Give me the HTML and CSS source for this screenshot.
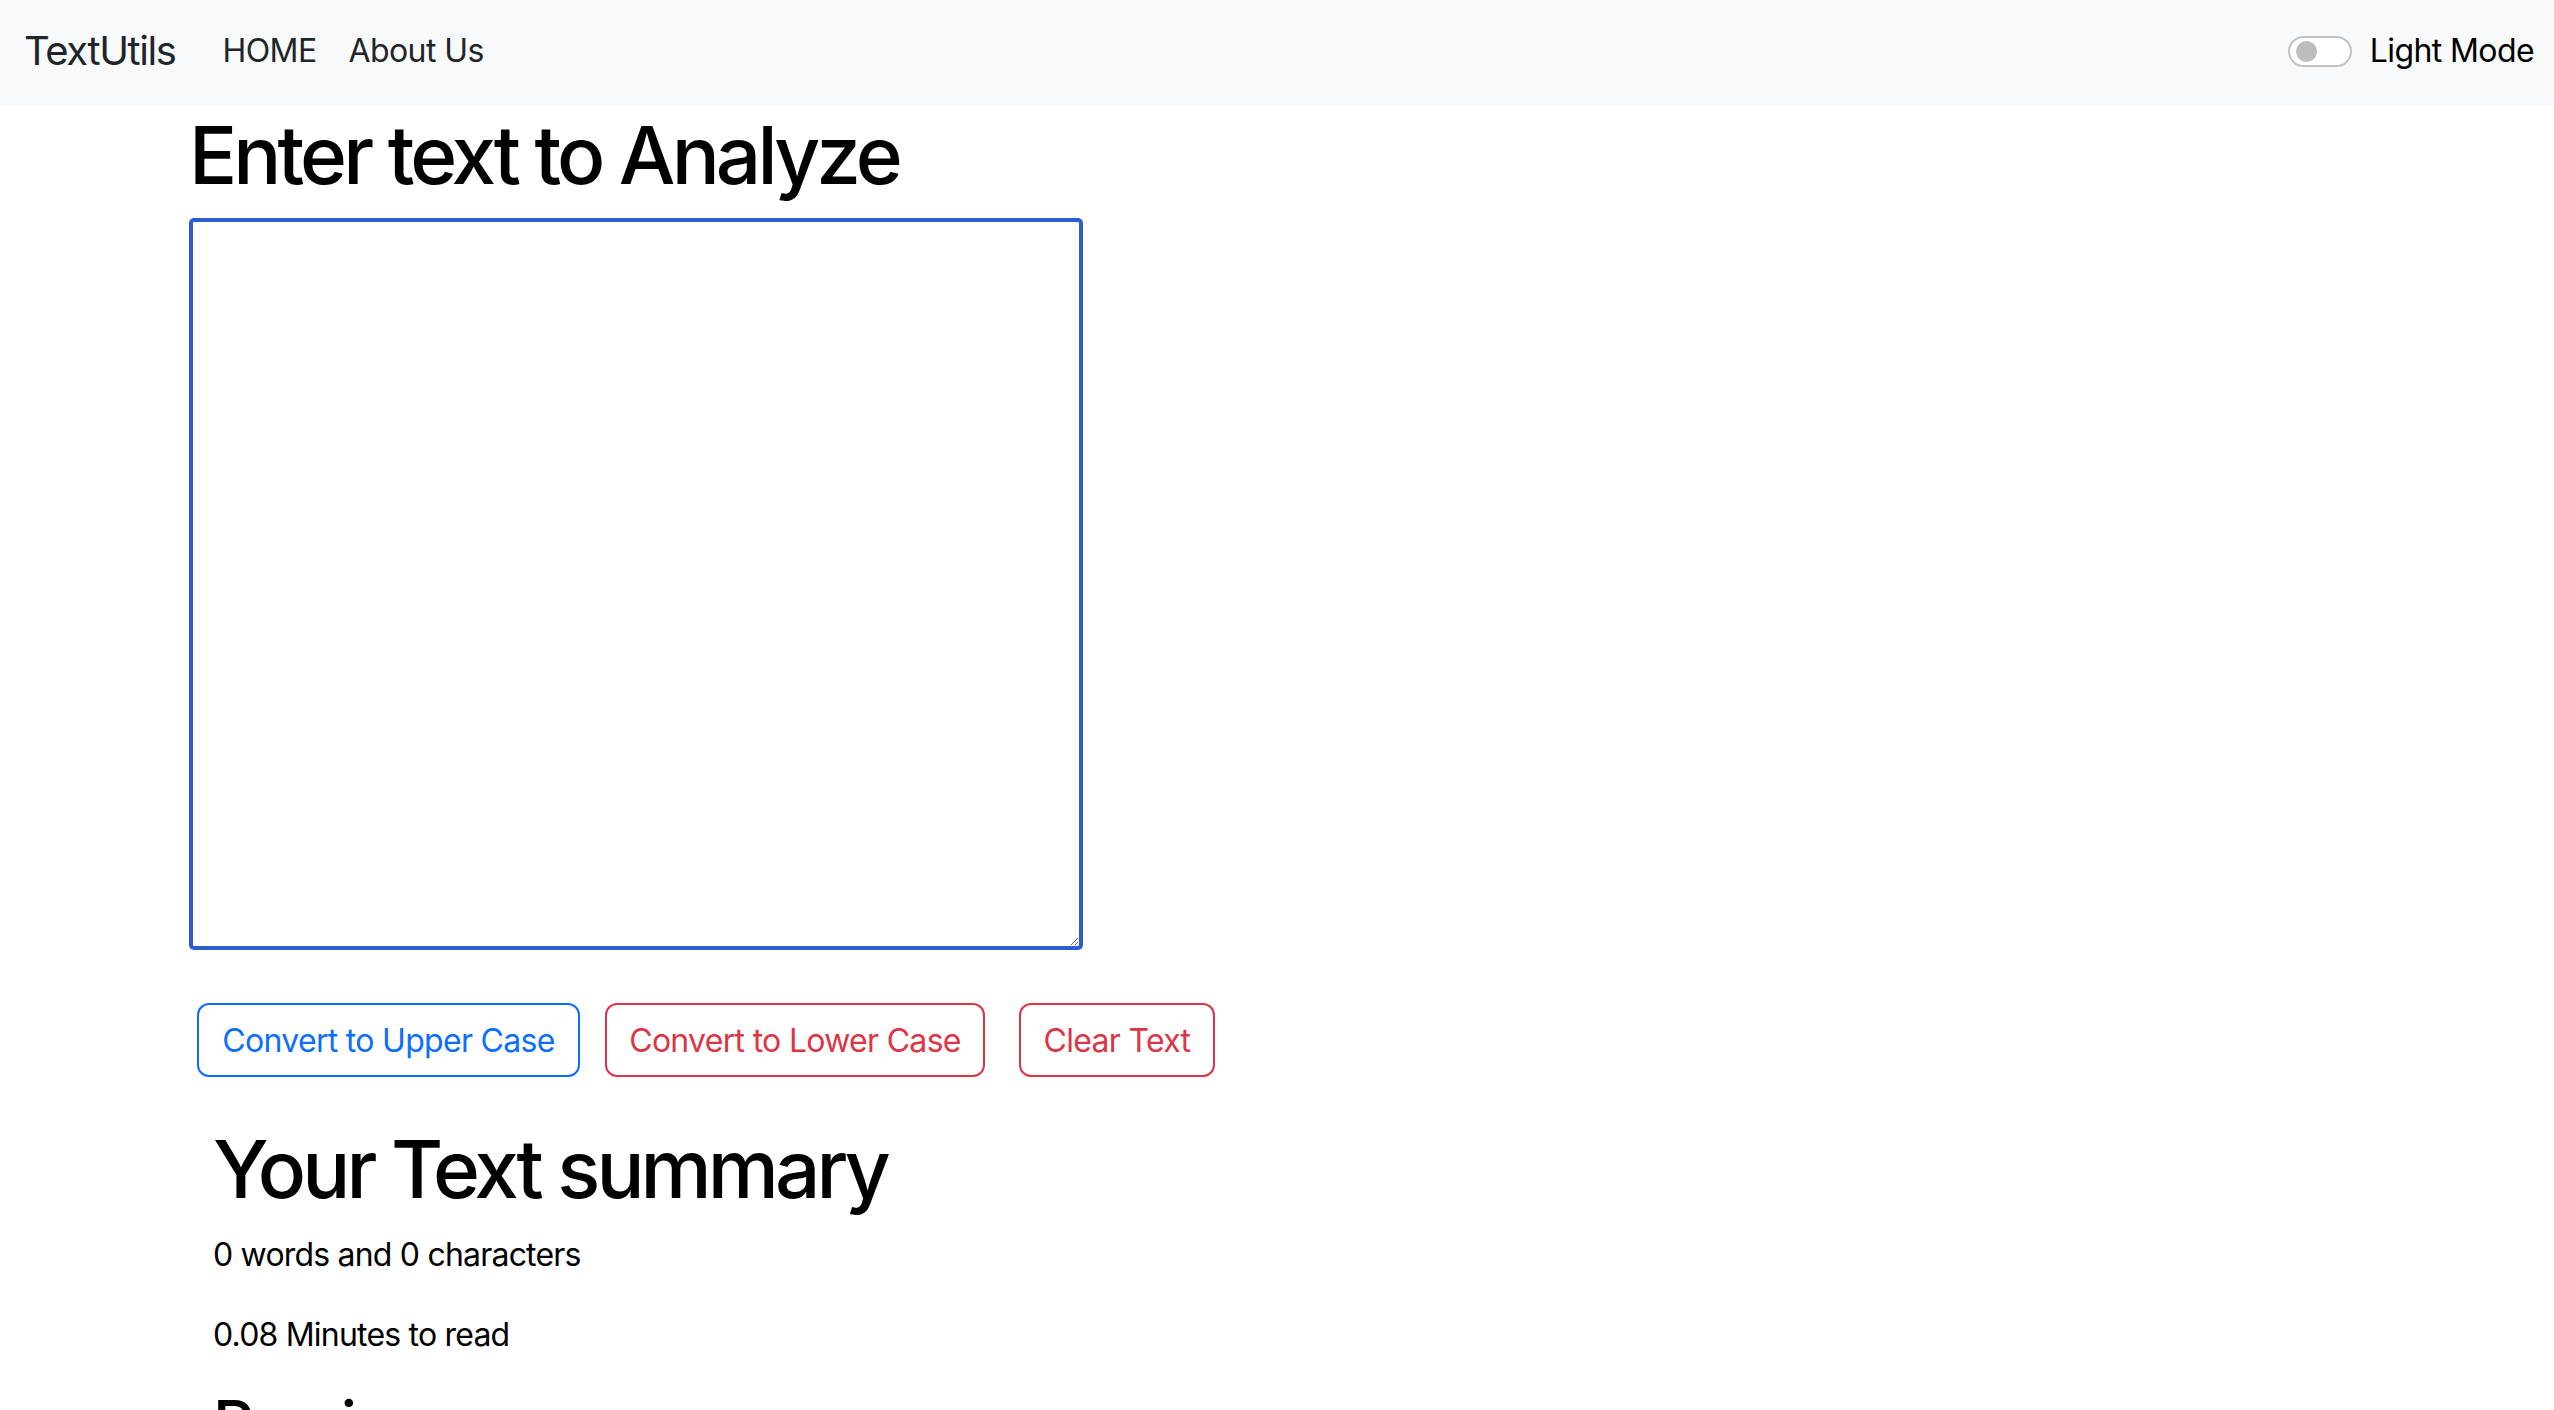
FILE: index.html
```html
<!DOCTYPE html>
<html lang="en">
<head>
<meta charset="utf-8">
<title>TextUtils</title>
<link rel="stylesheet" href="styles.css">
</head>
<body>
<nav class="navbar">
  <div class="nav-left">
    <a class="brand" href="#">TextUtils</a>
    <ul class="nav-links">
      <li><a href="#">HOME</a></li>
      <li><a href="#">About Us</a></li>
    </ul>
  </div>
  <label class="mode-switch">
    <span class="switch"><span class="knob"></span></span>
    <span class="mode-label">Light Mode</span>
  </label>
</nav>

<main class="container">
  <h1 class="title">Enter text to Analyze</h1>
  <textarea class="text-box" rows="8"></textarea>
  <div class="actions">
    <button class="btn btn-blue">Convert to Upper Case</button>
    <button class="btn btn-red btn-lower">Convert to Lower Case</button>
    <button class="btn btn-red btn-clear">Clear Text</button>
  </div>
  <section class="summary">
    <h1 class="title">Your Text summary</h1>
    <p>0 words and 0 characters</p>
    <p>0.08 Minutes to read</p>
    <h2 class="preview">Preview</h2>
  </section>
</main>
</body>
</html>
```

FILE: styles.css
```css
* { box-sizing: border-box; }

html, body {
  margin: 0;
  padding: 0;
  background: #ffffff;
  color: #000000;
  font-family: Inter, "Liberation Sans", Arial, sans-serif;
  overflow: hidden;
}

.navbar {
  height: 106px;
  background: #f8f9fa;
  display: flex;
  align-items: center;
  justify-content: space-between;
  padding: 0 20px 6px 24px;
}

.nav-left {
  display: flex;
  align-items: center;
}

.brand {
  font-size: 40px;
  color: #212529;
  text-decoration: none;
  margin-right: 47px;
  letter-spacing: -1.4px;
}

.nav-links {
  display: flex;
  list-style: none;
  margin: 0;
  padding: 0;
}

.nav-links a {
  display: block;
  font-size: 32px;
  color: #212529;
  text-decoration: none;
  padding: 0 16px;
  letter-spacing: -0.6px;
}

.nav-links li:first-child a { padding-left: 0; }

.mode-switch {
  display: flex;
  align-items: center;
  gap: 18px;
}

.switch {
  width: 64px;
  height: 31px;
  border: 2px solid #c2c2c2;
  border-radius: 16px;
  background: #ffffff;
  display: flex;
  align-items: center;
  padding-left: 6px;
  margin-top: 2px;
}

.knob {
  width: 21px;
  height: 21px;
  border-radius: 50%;
  background: #bdbdbd;
}

.mode-label {
  font-size: 32px;
  color: #000000;
  letter-spacing: -0.6px;
}

.container {
  padding-left: 189px;
}

.title {
  font-size: 80px;
  font-weight: 500;
  line-height: 96px;
  margin: 1px 0 15px;
  letter-spacing: -3.9px;
}

.text-box {
  display: block;
  width: 894px;
  height: 732px;
  border: 4px solid #2c5fcd;
  border-radius: 5px;
  outline: none;
  resize: both;
  font-family: inherit;
  font-size: 32px;
}

.actions {
  display: flex;
  margin: 53px 0 0 8px;
}

.btn {
  height: 74px;
  background: #ffffff;
  border: 2px solid;
  border-radius: 12px;
  font-family: inherit;
  font-size: 32px;
  padding: 0;
  white-space: nowrap;
  text-align: center;
  letter-spacing: -0.7px;
  cursor: pointer;
}

.btn-blue {
  width: 383px;
  color: #0d6efd;
  border-color: #0d6efd;
  margin-right: 25px;
}

.btn-red {
  color: #dc3545;
  border-color: #dc3545;
}

.btn-lower {
  width: 380px;
  margin-right: 34px;
}

.btn-clear {
  width: 196px;
}

.summary {
  padding-left: 24px;
  margin-top: 44px;
}

.summary .title {
  margin: 0 0 14px;
}

.summary p {
  font-size: 32px;
  line-height: 48px;
  margin: 0 0 32px;
  letter-spacing: -0.8px;
}

.preview {
  font-size: 64px;
  font-weight: 500;
  line-height: 77px;
  margin: -6px 0 0;
  letter-spacing: -2.5px;
}
```
